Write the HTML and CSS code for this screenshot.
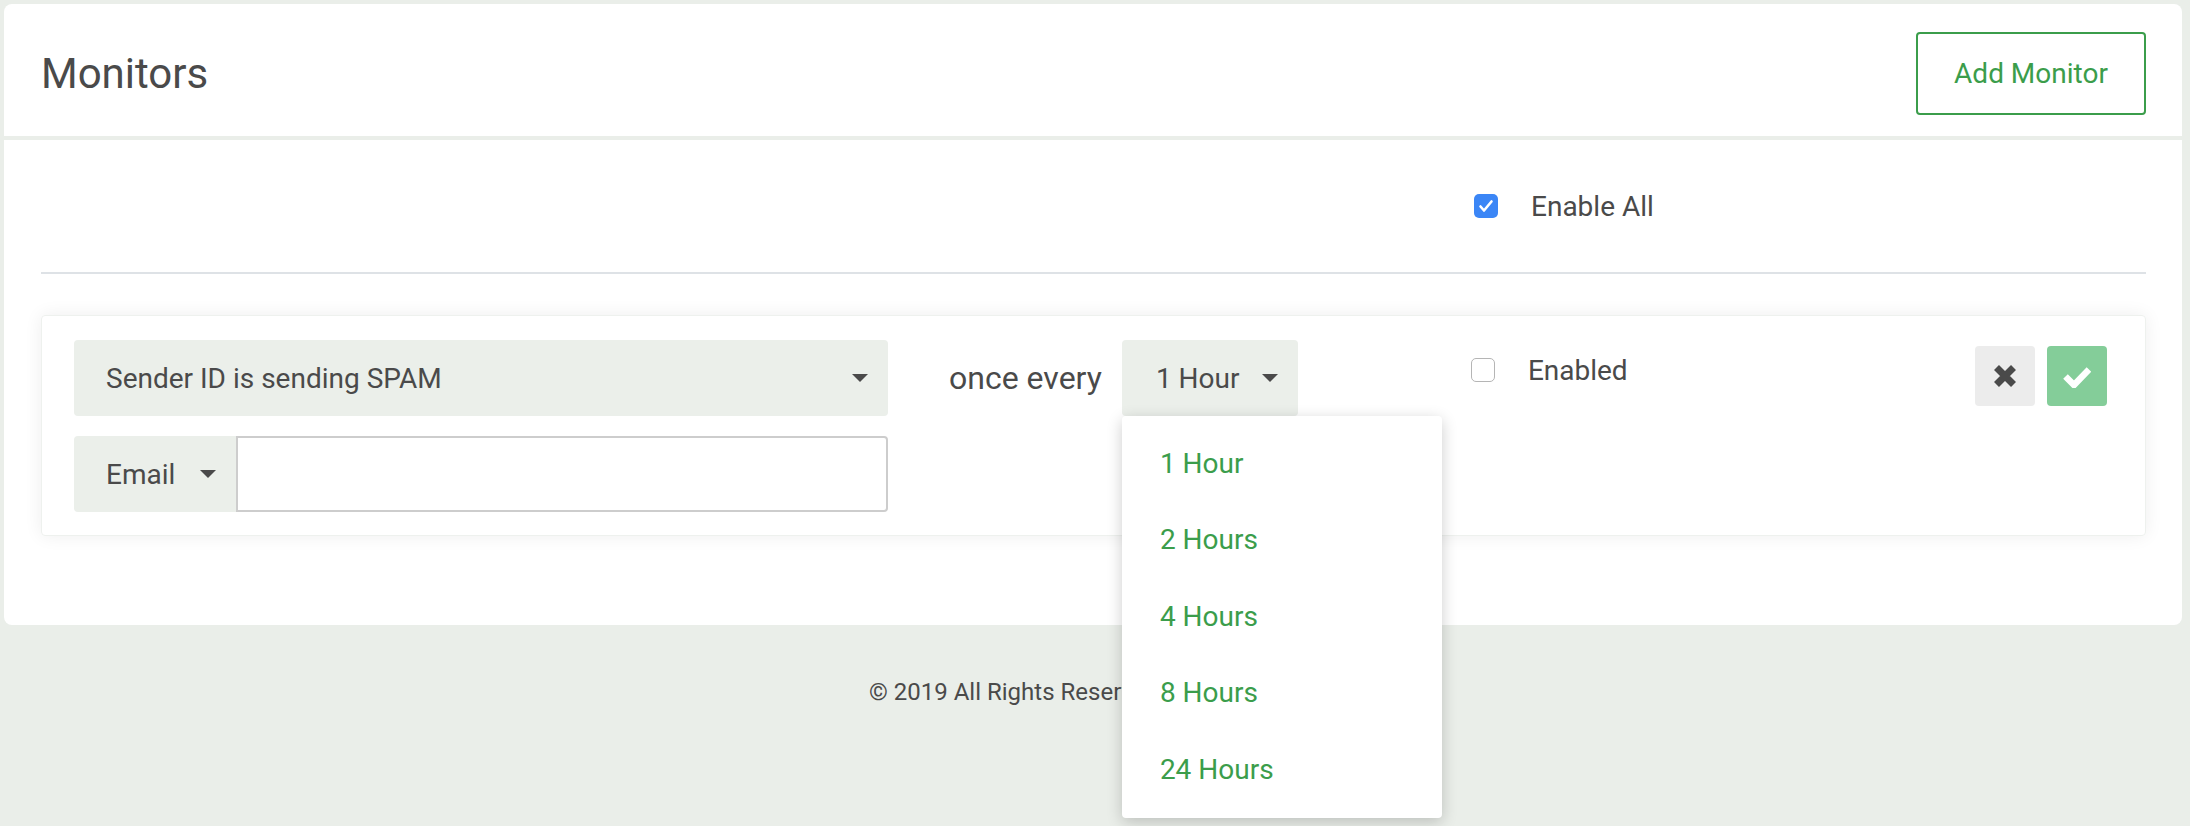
FILE: index.html
```html
<!DOCTYPE html>
<html lang="en">
<head>
    <meta charset="UTF-8">
    <meta name="viewport" content="width=device-width, initial-scale=1.0">
    <title>Monitors</title>
    <link rel="stylesheet" href="styles.css">
</head>
<body>
    <div class="page">
        <div class="panel">
            <div class="panel-header">
                <h1>Monitors</h1>
                <button class="btn-outline">Add Monitor</button>
            </div>

            <div class="panel-body">
                <div class="toolbar">
                    <label class="toggle">
                        <span class="check checked">
                            <svg viewBox="0 0 24 24" width="24" height="24"><path d="M6.5 12.5l3.5 4 7.5-9" fill="none" stroke="#fff" stroke-width="2.6" stroke-linecap="round" stroke-linejoin="round"/></svg>
                        </span>
                        Enable All
                    </label>
                </div>

                <div class="monitor">
                    <div class="monitor-main">
                        <div class="select select-wide">
                            <span>Sender ID is sending SPAM</span>
                            <span class="caret"></span>
                        </div>
                        <div class="input-group">
                            <div class="select select-addon">
                                <span>Email</span>
                                <span class="caret"></span>
                            </div>
                            <input class="text-input" type="text">
                        </div>
                    </div>

                    <div class="freq">
                        <span class="freq-label">once every</span>
                        <div class="dropdown">
                            <div class="select select-small">
                                <span>1 Hour</span>
                                <span class="caret"></span>
                            </div>
                            <ul class="dropdown-menu">
                                <li>1 Hour</li>
                                <li>2 Hours</li>
                                <li>4 Hours</li>
                                <li>8 Hours</li>
                                <li>24 Hours</li>
                            </ul>
                        </div>
                    </div>

                    <label class="toggle toggle-row">
                        <span class="check"></span>
                        Enabled
                    </label>

                    <div class="actions">
                        <button class="btn-icon btn-cancel">
                            <svg viewBox="0 0 24 24" width="24" height="24"><path d="M3.5 3.5l17 17M20.5 3.5l-17 17" stroke="#4a4a4a" stroke-width="7"/></svg>
                        </button>
                        <button class="btn-icon btn-save">
                            <svg viewBox="0 0 28 24" width="28" height="24"><path d="M2.5 12.5l8.5 8.5L26 5.5" fill="none" stroke="#fff" stroke-width="6.5"/></svg>
                        </button>
                    </div>
                </div>
            </div>
        </div>

        <div class="footer">&copy; 2019 All Rights Reserved.</div>
    </div>
</body>
</html>
```

FILE: styles.css
```css
body {
    margin: 0;
    background-color: #eaeee9;
    font-family: Roboto, "Liberation Sans", sans-serif;
    color: #4a4a4a;
}
.page {
    box-sizing: border-box;
    min-height: 100vh;
    padding: 4px 8px 0 4px;
}
.panel {
    background-color: #fff;
    border-radius: 8px;
}
.panel-header {
    display: flex;
    align-items: center;
    justify-content: space-between;
    height: 125px;
    padding: 7px 36px 0 37px;
    border-bottom: 4px solid #eaeee9;
}
.panel-header h1 {
    margin: 0;
    font-size: 42px;
    font-weight: 400;
    color: #4a4a4a;
}
.btn-outline {
    width: 230px;
    height: 83px;
    background: #fff;
    border: 2px solid #3b9d4b;
    border-radius: 4px;
    color: #3b9d4b;
    font-family: inherit;
    font-size: 28px;
    cursor: pointer;
}
.panel-body {
    padding: 0 36px 89px 37px;
}
.toolbar {
    display: flex;
    align-items: center;
    height: 132px;
    border-bottom: 2px solid #dee2e6;
}
.toolbar .toggle {
    margin-left: 1433px;
}
.toggle {
    display: flex;
    align-items: center;
    gap: 33px;
    font-size: 28px;
}
.check {
    box-sizing: border-box;
    display: flex;
    width: 24px;
    height: 24px;
    border: 1.5px solid #b5b5b5;
    border-radius: 5px;
    background: #fff;
}
.check.checked {
    border: none;
    background: #3b86f6;
}

/* monitor row */
.monitor {
    display: flex;
    align-items: flex-start;
    margin-top: 41px;
    padding: 24px 38px 23px 32px;
    border: 1px solid #eef1ee;
    border-radius: 4px;
    box-shadow: 0 0 18px rgba(0, 0, 0, 0.07);
}
.monitor-main {
    display: flex;
    flex-direction: column;
    gap: 20px;
    width: 814px;
}
.select {
    box-sizing: border-box;
    display: flex;
    align-items: center;
    justify-content: space-between;
    height: 76px;
    padding: 0 20px 0 32px;
    background-color: #ebefea;
    border-radius: 4px;
    font-size: 28px;
}
.caret {
    width: 0;
    height: 0;
    border-left: 8px solid transparent;
    border-right: 8px solid transparent;
    border-top: 8px solid #4a4a4a;
}
.input-group {
    display: flex;
    height: 76px;
}
.select-addon {
    width: 162px;
    border-radius: 4px 0 0 4px;
}
.text-input {
    box-sizing: border-box;
    flex: 1;
    height: 76px;
    margin: 0;
    border: 2px solid #cdcdcd;
    border-radius: 0 4px 4px 0;
    font-size: 28px;
}
.freq {
    display: flex;
    align-items: center;
    gap: 20px;
    margin-left: 61px;
}
.freq-label {
    font-size: 32px;
}
.dropdown {
    position: relative;
}
.select-small {
    width: 176px;
    padding-left: 34px;
}
.dropdown-menu {
    position: absolute;
    top: 100%;
    left: 0;
    z-index: 5;
    width: 320px;
    margin: 0;
    padding: 9px 0 10px;
    list-style: none;
    background: #fff;
    border-radius: 4px;
    box-shadow: 0 4px 16px rgba(0, 0, 0, 0.2);
}
.dropdown-menu li {
    display: flex;
    align-items: center;
    height: 76.5px;
    padding-left: 38px;
    font-size: 28px;
    color: #3b9d4b;
}
.toggle-row {
    height: 60px;
    margin-left: 173px;
}
.actions {
    display: flex;
    gap: 12px;
    margin-left: auto;
    margin-top: 6px;
}
.btn-icon {
    display: flex;
    align-items: center;
    justify-content: center;
    width: 60px;
    height: 60px;
    padding: 0;
    border: none;
    border-radius: 4px;
    cursor: pointer;
}
.btn-cancel {
    background-color: #ececec;
}
.btn-save {
    background-color: #84cd99;
}
.footer {
    padding: 47px 0 0 865px;
    font-size: 24px;
    line-height: 40px;
    color: #4a4a4a;
}
```
